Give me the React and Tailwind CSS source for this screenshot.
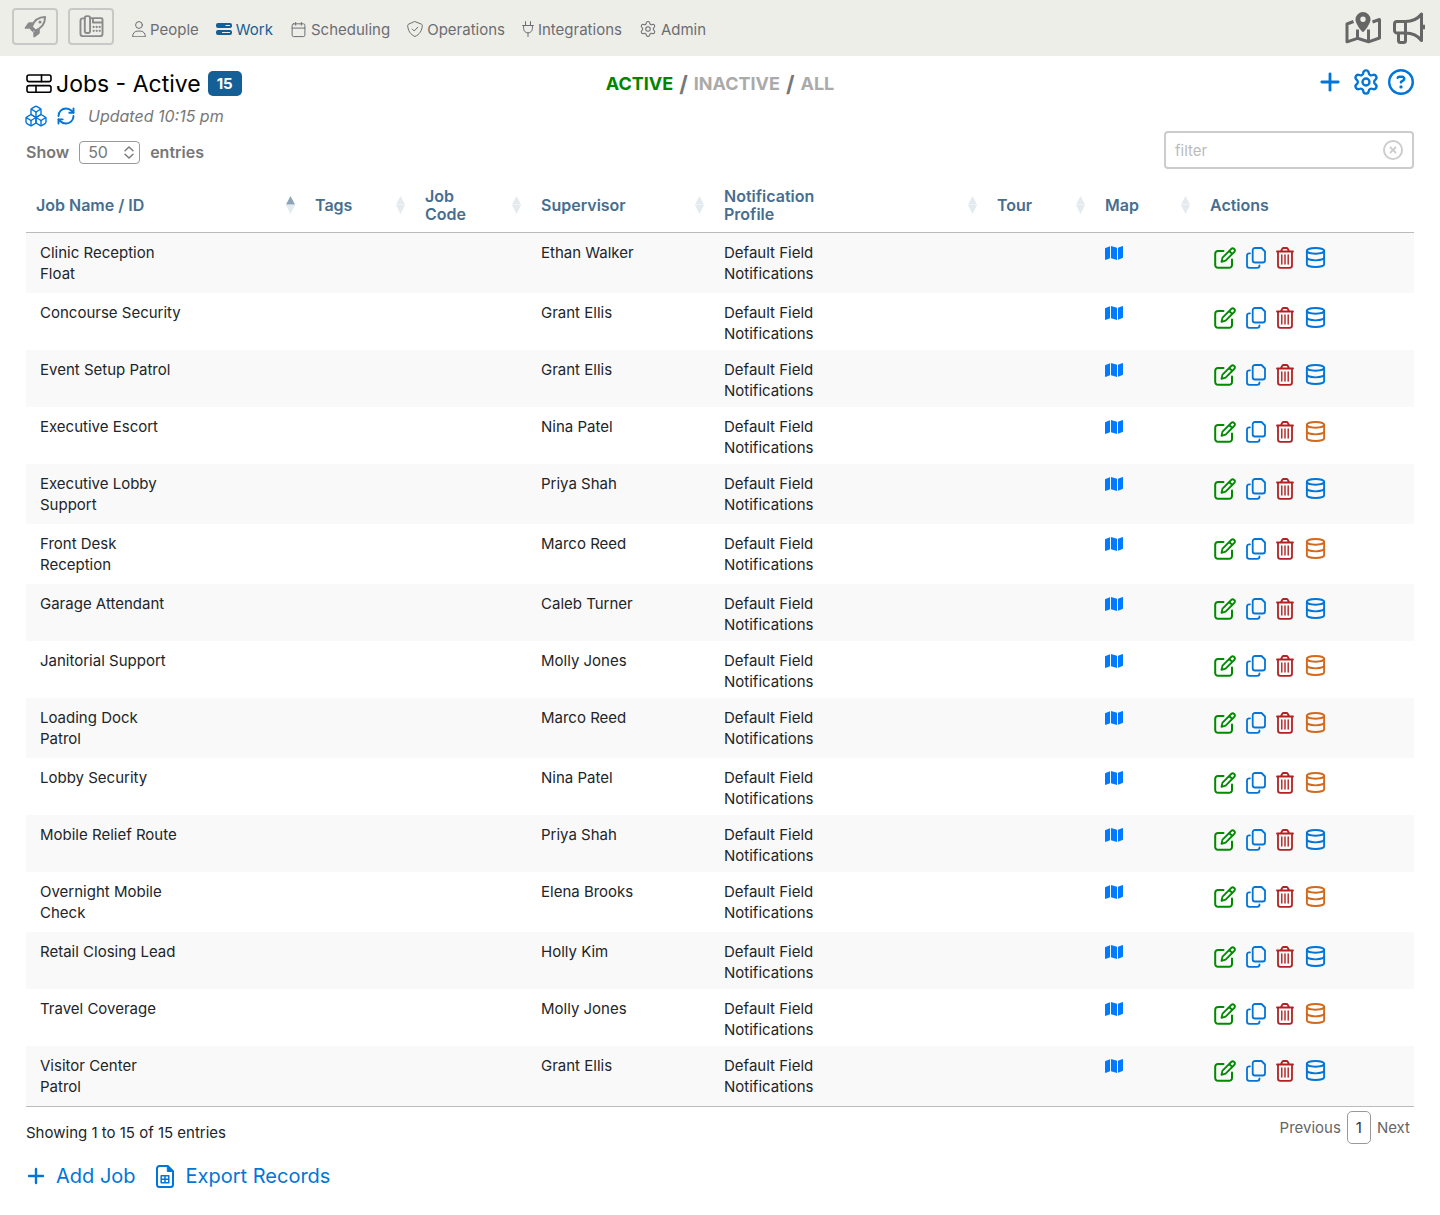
import { useState } from 'react';
import { Boxes, Calendar, Database, Plus, RefreshCw, Settings } from 'lucide-react';
import { FaMap, FaRegCircleQuestion, FaRegCircleXmark } from 'react-icons/fa6';

const NAV = [
  { label: 'People', icon: PersonIcon },
  { label: 'Work', icon: WorkIcon, active: true },
  { label: 'Scheduling', icon: ScheduleIcon },
  { label: 'Operations', icon: ShieldIcon },
  { label: 'Integrations', icon: PlugIcon },
  { label: 'Admin', icon: AdminIcon },
];

const COLUMNS = [
  { label: 'Job Name / ID', width: 'w-[279px]', sort: 'asc' },
  { label: 'Tags', width: 'w-[110px]', sort: 'none' },
  { label: 'Job\nCode', width: 'w-[116px]', sort: 'none' },
  { label: 'Supervisor', width: 'w-[183px]', sort: 'none' },
  { label: 'Notification\nProfile', width: 'w-[273px]', sort: 'none' },
  { label: 'Tour', width: 'w-[108px]', sort: 'none' },
  { label: 'Map', width: 'w-[105px]', sort: 'none' },
  { label: 'Actions', width: '' },
];

const PROFILE = 'Default Field Notifications';

const JOBS = [
  { name: 'Clinic Reception\nFloat', supervisor: 'Ethan Walker' },
  { name: 'Concourse Security', supervisor: 'Grant Ellis' },
  { name: 'Event Setup Patrol', supervisor: 'Grant Ellis' },
  { name: 'Executive Escort', supervisor: 'Nina Patel', pending: true },
  { name: 'Executive Lobby\nSupport', supervisor: 'Priya Shah' },
  { name: 'Front Desk\nReception', supervisor: 'Marco Reed', pending: true },
  { name: 'Garage Attendant', supervisor: 'Caleb Turner' },
  { name: 'Janitorial Support', supervisor: 'Molly Jones', pending: true },
  { name: 'Loading Dock\nPatrol', supervisor: 'Marco Reed', pending: true },
  { name: 'Lobby Security', supervisor: 'Nina Patel', pending: true },
  { name: 'Mobile Relief Route', supervisor: 'Priya Shah' },
  { name: 'Overnight Mobile\nCheck', supervisor: 'Elena Brooks', pending: true },
  { name: 'Retail Closing Lead', supervisor: 'Holly Kim' },
  { name: 'Travel Coverage', supervisor: 'Molly Jones', pending: true },
  { name: 'Visitor Center\nPatrol', supervisor: 'Grant Ellis' },
];

function Svg({ children, className, box = '0 0 24 24', stroke = 2 }) {
  return (
    <svg
      className={className}
      viewBox={box}
      fill="none"
      stroke="currentColor"
      strokeWidth={stroke}
      strokeLinecap="round"
      strokeLinejoin="round"
      aria-hidden
    >
      {children}
    </svg>
  );
}

function PersonIcon() {
  return (
    <Svg className="h-4 w-[14px]" box="0 0 14 16" stroke={1}>
      <circle cx="7" cy="4" r="3.4" />
      <path d="M.6 15.4c0-3.2 2.2-5.3 5-5.3h2.8c2.8 0 5 2.1 5 5.3z" />
    </Svg>
  );
}

function WorkIcon() {
  return (
    <svg className="h-3 w-4" viewBox="0 0 16 12" fill="currentColor" aria-hidden>
      <path d="M2 0h12a2 2 0 0 1 2 2v1a2 2 0 0 1-2 2H2a2 2 0 0 1-2-2V2a2 2 0 0 1 2-2zM2 7h12a2 2 0 0 1 2 2v1a2 2 0 0 1-2 2H2a2 2 0 0 1-2-2V9a2 2 0 0 1 2-2z" />
      <path d="M9.5 2.5H14M6 9.5h8" stroke="#eeeee9" strokeWidth="1" />
    </svg>
  );
}

function ScheduleIcon() {
  return <Calendar className="h-[17px] w-[17px]" strokeWidth={1.4} aria-hidden />;
}

function ShieldIcon() {
  return (
    <Svg className="h-4 w-4" box="0 0 16 16" stroke={1}>
      <path d="M8 .6l6.5 2.6c.5.2.8.6.8 1.1C15.2 9.5 12.5 13.6 8 15.5 3.5 13.6.8 9.5.7 4.3c0-.5.3-.9.8-1.1z" />
      <path d="M5.2 8l2 2 3.6-3.8" />
    </Svg>
  );
}

function PlugIcon() {
  return (
    <Svg className="h-4 w-3" box="0 0 12 16" stroke={1}>
      <path d="M3.5.6v3.8M8.5.6v3.8M.6 4.5h10.8M1.6 4.5v3a4.4 4.4 0 0 0 8.8 0v-3M6 12v3.5" />
    </Svg>
  );
}

function AdminIcon() {
  return <Settings className="h-[18px] w-[18px]" strokeWidth={1.4} aria-hidden />;
}

function RocketIcon() {
  return (
    <svg className="h-[23px] w-[23px]" viewBox="0 0 24 24" fill="currentColor" aria-hidden>
      <path d="M8 12.5C10 6.5 14 2 22 2c0 8-4.5 12-10.5 14.2z" fill="none" stroke="currentColor" strokeWidth="2" strokeLinejoin="round" />
      <path d="M9.5 7.5H5.8c-.8 0-1.5.4-1.9 1L.8 13c-.4.7 0 1.4.8 1.4h4.6l1.5-.4zM16.5 14.5v3.7c0 .8-.4 1.5-1 1.9l-4.3 3.1c-.7.4-1.5 0-1.5-.8v-4.6l.5-1.6zM8 11l-1.7 4 3 3 3.8-1.7z" />
      <circle cx="16.7" cy="7.3" r="1.6" />
    </svg>
  );
}

function DeskPhoneIcon() {
  return (
    <Svg className="h-[23px] w-[25px]" box="0 0 26 24">
      <rect x="6" y="1.2" width="5.5" height="17.5" rx="2" />
      <path d="M6 3.5H4A2.5 2.5 0 0 0 1.5 6v13.5A2.5 2.5 0 0 0 4 22h18a2.5 2.5 0 0 0 2.500-2.500V4.800A1.500 1.500 0 0 0 23 3.300H11.500M14.500 3.500v4.300h9.800" />
      <g fill="currentColor" stroke="none">
        <circle cx="15.2" cy="12.5" r="1.2" />
        <circle cx="18.4" cy="12.5" r="1.2" />
        <circle cx="21.6" cy="12.5" r="1.2" />
        <circle cx="15.2" cy="16.5" r="1.2" />
        <circle cx="18.4" cy="16.5" r="1.2" />
        <circle cx="21.6" cy="16.5" r="1.2" />
      </g>
    </Svg>
  );
}

function MapPinIcon() {
  return (
    <svg className="h-8 w-9" viewBox="0 0 36 32" fill="none" aria-hidden>
      <path
        d="M8.5 9.5L2 12v17.8l10.5-3.5 11 3.5L34.5 26V7.5l-7 2.5M12.5 17.5v8.8M23.5 17.5v12.3"
        stroke="currentColor"
        strokeWidth="3"
        strokeLinejoin="round"
      />
      <path
        d="M18 0a7.5 7.5 0 0 0-7.5 7.4C10.5 11 14.5 16.5 17 19.5c.5.6 1.5.6 2 0 2.5-3 6.5-8.5 6.5-12.1A7.5 7.5 0 0 0 18 0zm0 10a2.7 2.7 0 1 1 0-5.4 2.7 2.7 0 0 1 0 5.4z"
        fill="currentColor"
      />
    </svg>
  );
}

function MegaphoneIcon() {
  return (
    <Svg className="h-8 w-8" box="0 0 32 32" stroke={3}>
      <path d="M12.5 9.5H4A2.5 2.5 0 0 0 1.5 12v6.5A2.5 2.5 0 0 0 4 21h8.5zM12.5 9.5C19 9.5 25 6.5 28.5 2v26.500C25 24 19 21 12.500 21M5.500 21v7.500a2 2 0 0 0 2 2h3a2 2 0 0 0 2-2V21" />
      <path d="M31 13.5v3" strokeWidth="2" />
    </Svg>
  );
}

function JobsIcon() {
  return (
    <Svg className="h-5 w-[26px]" box="0 0 26 20" stroke={1.6}>
      <rect x="1" y="1" width="24" height="6.6" rx="2" />
      <rect x="1" y="11.6" width="24" height="6.6" rx="2" />
      <path d="M15.5 1v6.6M10 11.6v6.6" />
    </Svg>
  );
}

function EditIcon() {
  return (
    <Svg className="h-[22px] w-[22px]" box="0 0 22 22">
      <path d="M9.5 4H4a2.8 2.8 0 0 0-2.8 2.8V18A2.8 2.8 0 0 0 4 20.8h11.2A2.8 2.8 0 0 0 18 18v-5.5" />
      <path d="M7.5 14.8l1-4.2L17.2 2a2.1 2.1 0 0 1 3 3l-8.6 8.7zM15.3 4l2.9 2.9" strokeWidth="1.8" />
    </Svg>
  );
}

function CopyIcon() {
  return (
    <Svg className="h-[22px] w-5" box="0 0 20 22" stroke={1.8}>
      <path d="M9 1h6.5L19 4.5v8.7a2.3 2.3 0 0 1-2.3 2.3H9a2.3 2.3 0 0 1-2.3-2.3V3.3A2.3 2.3 0 0 1 9 1z" />
      <path d="M4 6.3h-.7A2.3 2.3 0 0 0 1 8.6v9.9a2.3 2.3 0 0 0 2.3 2.3h7.9a2.3 2.3 0 0 0 2.3-2.3" />
    </Svg>
  );
}

function TrashIcon() {
  return (
    <Svg className="h-[22px] w-[18px]" box="0 0 18 22" stroke={1.8}>
      <path d="M1 4.5h16M2 4.5v14a2.3 2.3 0 0 0 2.3 2.3h9.4a2.3 2.3 0 0 0 2.3-2.3v-14M5 4l1.3-2.3c.3-.5.7-.7 1.2-.7h3c.5 0 .9.2 1.2.7L13 4" />
      <path d="M5.8 8v9M9 8v9M12.2 8v9" strokeWidth="1.4" />
    </Svg>
  );
}

function SheetIcon() {
  return (
    <Svg className="h-[23px] w-[18px]" box="0 0 18 23">
      <path d="M3.5 1h8.3L17 6.2v13.3a2.5 2.5 0 0 1-2.5 2.5h-11A2.5 2.5 0 0 1 1 19.5v-16A2.5 2.5 0 0 1 3.5 1z" />
      <path d="M11.3 1v5.5H17z" fill="currentColor" strokeWidth="1" />
      <path d="M5.2 10.8h7.6v7H5.2zM5.2 14.3h7.6M9 10.8v7" strokeWidth="1.5" />
    </Svg>
  );
}

function SortArrows({ sort }) {
  return (
    <svg className="h-[18px] w-[9px] shrink-0" viewBox="0 0 9 18" aria-hidden>
      <path d="M4.5 0L9 8.5H0z" fill={sort === 'asc' ? '#8aa4b8' : '#e4eaee'} />
      <path d="M0 9h9L4.5 18z" fill="#e4eaee" />
    </svg>
  );
}

function TopBar() {
  const square = 'flex h-[37px] w-[46px] items-center justify-center rounded-[4px] border-2 border-[#c8c8c6] text-[#8a8a8c]';
  return (
    <header className="flex h-14 items-center justify-between bg-[#eeeee9] pl-3 pr-[15px]">
      <div className="flex items-center">
        <div className="flex gap-[10px] pb-[3px]">
          <button type="button" aria-label="Launch" className={square}><RocketIcon /></button>
          <button type="button" aria-label="Phone" className={square}><DeskPhoneIcon /></button>
        </div>
        <nav className="ml-[18px] flex items-center gap-[17px] pt-[2px]">
          {NAV.map(({ label, icon: Icon, active }) => (
            <a
              key={label}
              href={`#${label.toLowerCase()}`}
              className={`flex items-center gap-1 ${active ? 'text-[#155f97]' : 'text-[#6b6d72]'}`}
            >
              <Icon />
              {label}
            </a>
          ))}
        </nav>
      </div>
      <div className="flex items-center gap-3 text-[#666]">
        <button type="button" aria-label="Live map"><MapPinIcon /></button>
        <button type="button" aria-label="Announcements"><MegaphoneIcon /></button>
      </div>
    </header>
  );
}

function StatusTabs({ status, onChange }) {
  return (
    <div className="flex items-center gap-[6px] text-lg font-bold">
      {['ACTIVE', 'INACTIVE', 'ALL'].map((s, i) => (
        <div key={s} className="flex items-center gap-[6px]">
          {i > 0 && <span className="text-[22px] leading-none text-[#777]">/</span>}
          <button type="button" onClick={() => onChange(s)} className={s === status ? 'text-[#008500]' : 'text-[#aaa]'}>
            {s}
          </button>
        </div>
      ))}
    </div>
  );
}

function JobRow({ job }) {
  return (
    <tr className="align-top odd:bg-[#f9f9f9]">
      <td className="whitespace-pre-line py-[9px] pl-[14px]">{job.name}</td>
      <td />
      <td />
      <td className="pb-[6px] pl-[10px] pt-[9px]">{job.supervisor}</td>
      <td className="pb-[6px] pl-[10px] pt-[9px]"><div className="w-[110px]">{PROFILE}</div></td>
      <td />
      <td className="pl-[10px] pt-[11px]">
        <button type="button" aria-label="Show on map" className="block text-[#007bff]"><FaMap className="h-[18px] w-[18px]" /></button>
      </td>
      <td className="pl-[14px] pt-[13px]">
        <div className="flex items-center gap-[10px]">
          <button type="button" aria-label="Edit" className="text-[#008a00]"><EditIcon /></button>
          <button type="button" aria-label="Copy" className="text-[#0275d8]"><CopyIcon /></button>
          <button type="button" aria-label="Delete" className="text-[#b22222]"><TrashIcon /></button>
          <button type="button" aria-label="Records" className={job.pending ? 'text-[#d2691e]' : 'text-[#0275d8]'}>
            <Database className="h-[23px] w-[23px]" aria-hidden />
          </button>
        </div>
      </td>
    </tr>
  );
}

export default function App() {
  const [status, setStatus] = useState('ACTIVE');
  const [filter, setFilter] = useState('');
  const jobs = JOBS.filter((j) => j.name.toLowerCase().includes(filter.toLowerCase()));

  return (
    <div className="bg-white font-['Inter',sans-serif] text-[15px] leading-[21px] text-[#212529]">
      <TopBar />

      <main className="px-[26px] pb-6 pt-3">
        {/* Title row */}
        <div className="grid h-[30px] grid-cols-[1fr_auto_1fr] items-center">
          <div className="flex items-center gap-1 text-black">
            <JobsIcon />
            <h1 className="text-[23px] leading-[30px]">Jobs - Active</h1>
            <span className="ml-[3px] rounded-[5px] bg-[#155f97] px-[9px] py-[2px] text-[15px] font-bold text-white">15</span>
          </div>
          <StatusTabs status={status} onChange={setStatus} />
          <div className="flex items-center justify-end gap-2 pb-[3px] text-[#0275d8]">
            <button type="button" aria-label="Add job"><Plus className="h-7 w-7" strokeWidth={2.4} /></button>
            <button type="button" aria-label="Settings"><Settings className="h-7 w-7" /></button>
            <button type="button" aria-label="Help"><FaRegCircleQuestion className="h-[26px] w-[26px]" /></button>
          </div>
        </div>

        <div className="-ml-[2px] mt-[6px] flex h-6 items-center gap-2 text-[#0275d8]">
          <button type="button" aria-label="Groups"><Boxes className="h-6 w-6" strokeWidth={1.4} /></button>
          <button type="button" aria-label="Refresh"><RefreshCw className="h-5 w-5" strokeWidth={2.3} /></button>
          <span className="ml-1 text-base italic text-[#777]">Updated 10:15 pm</span>
        </div>

        <div className="mt-[3px] flex items-center justify-between">
          <label className="flex items-center gap-[10px] pt-1 text-base font-semibold text-[#777]">
            Show
            <span className="relative flex">
              <select defaultValue="50" className="h-[23px] w-[61px] appearance-none rounded-[4px] border border-[#999] pl-2 text-base font-normal leading-none text-[#777]">
                <option>10</option>
                <option>25</option>
                <option>50</option>
                <option>100</option>
              </select>
              <Svg className="pointer-events-none absolute right-[6px] top-[5px] h-[13px] w-[10px]" box="0 0 10 13" stroke={1.4}>
                <path d="M1 4.8L5 1l4 3.8M1 8.2L5 12l4-3.8" />
              </Svg>
            </span>
            entries
          </label>
          <div className="flex h-[38px] w-[250px] items-center rounded-[4px] border-2 border-[#ccc] px-[9px]">
            <input
              aria-label="Filter jobs"
              placeholder="filter"
              value={filter}
              onChange={(e) => setFilter(e.target.value)}
              className="min-w-0 flex-1 outline-none placeholder:text-[#bbb]"
            />
            <button type="button" aria-label="Clear filter" onClick={() => setFilter('')} className="text-[#ccc]">
              <FaRegCircleXmark className="h-5 w-5" />
            </button>
          </div>
        </div>

        <table className="mt-2 w-full table-fixed border-collapse border-b border-[#bbb]">
          <thead>
            <tr className="border-b border-[#bbb]">
              {COLUMNS.map((col) => (
                <th key={col.label} scope="col" className={`pb-[9px] pl-[10px] pt-[10px] text-left text-base font-semibold leading-[18px] text-[#476e8f] ${col.width}`}>
                  <div className="flex items-center justify-between pr-[10px]">
                    <span className="whitespace-pre-line">{col.label}</span>
                    {col.sort && <SortArrows sort={col.sort} />}
                  </div>
                </th>
              ))}
            </tr>
          </thead>
          <tbody>
            {jobs.map((job) => <JobRow key={job.name} job={job} />)}
          </tbody>
        </table>

        <div className="mt-1 flex items-start justify-between">
          <p className="pt-[11px]">Showing 1 to 15 of 15 entries</p>
          <div className="flex items-center gap-[6px] pr-1 text-[#666]">
            <button type="button">Previous</button>
            <button type="button" aria-current="page" className="h-[33px] w-6 rounded-[5px] border border-[#999] text-[#333]">1</button>
            <button type="button">Next</button>
          </div>
        </div>

        <div className="-ml-[2px] mt-4 flex items-center gap-5 text-xl leading-8 text-[#0275d8]">
          <button type="button" className="flex items-center gap-2"><Plus className="h-6 w-6" strokeWidth={2.4} aria-hidden />Add Job</button>
          <button type="button" className="flex items-center gap-3"><SheetIcon />Export Records</button>
        </div>
      </main>
    </div>
  );
}
